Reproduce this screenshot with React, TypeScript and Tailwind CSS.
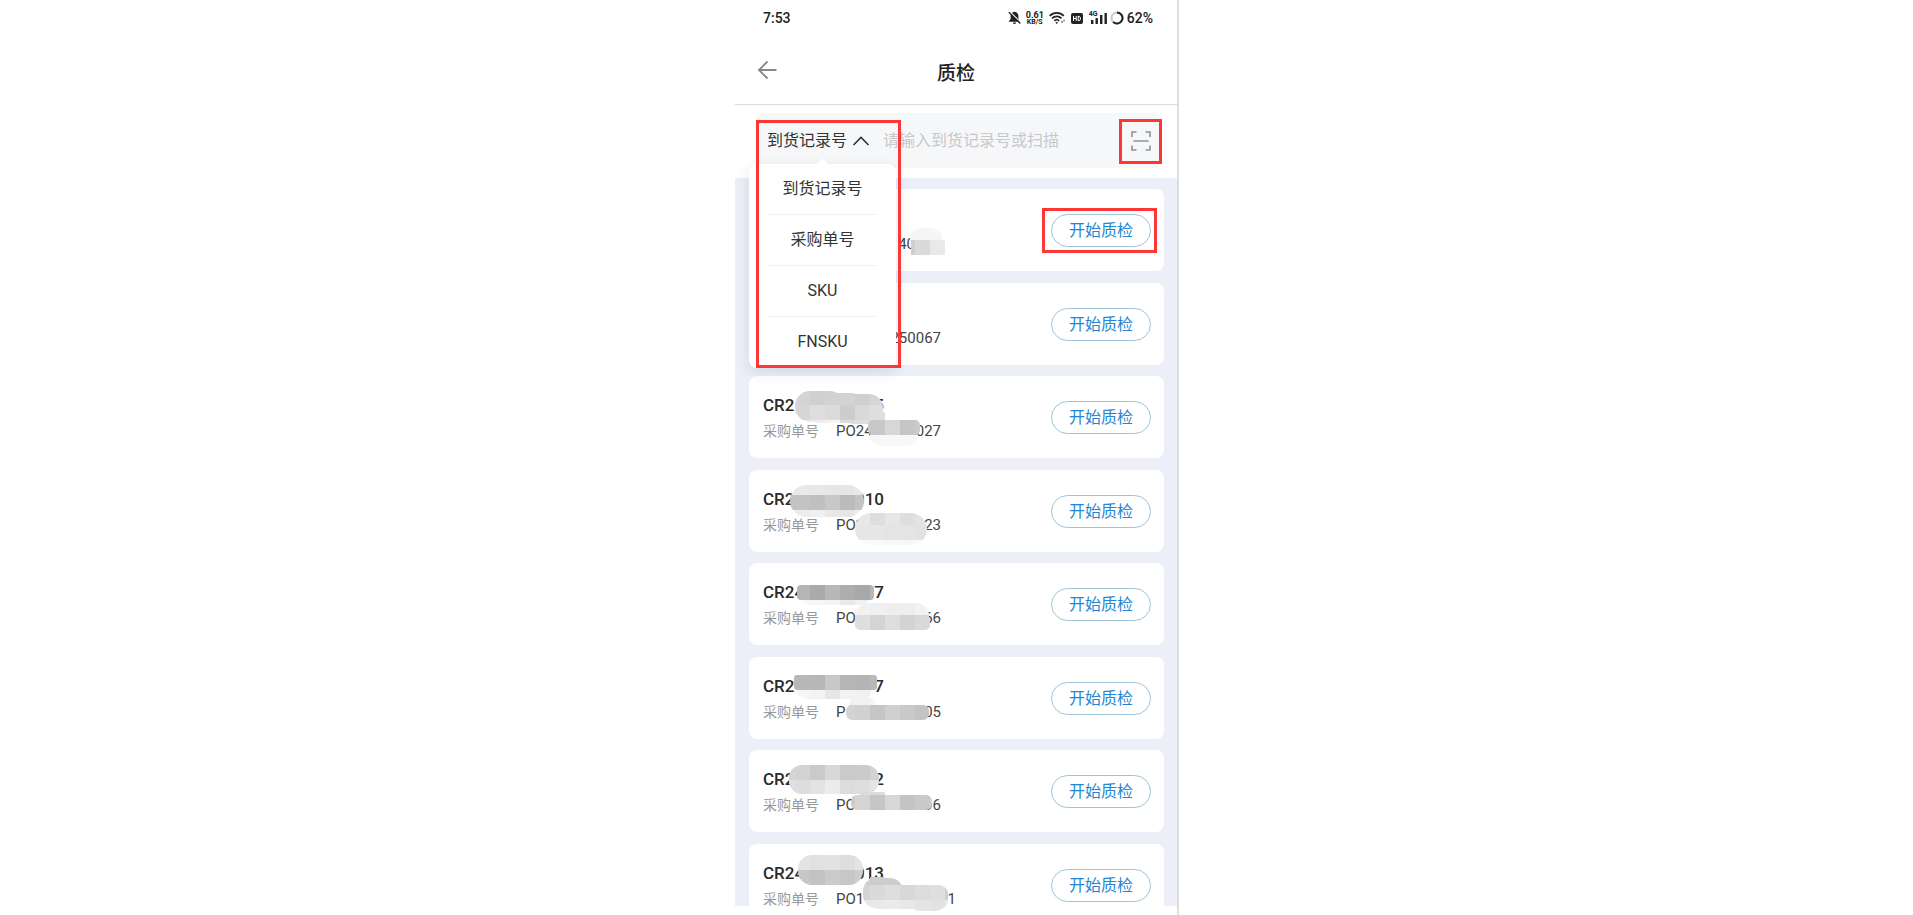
import React from "react";

type Box = [x: number, y: number, w: number, h: number, r: number];
type Mosaic = { shape: Box[]; x: number; y: number; rows: string[] };
type RecordItem = {
  top: number;
  code?: [string, string];
  order: [string, string];
  orderClass?: string;
  mosaics: Mosaic[];
};

const CELL = 15;

// Each row is a space separated list of two digit grey levels, one per cell.
const records: RecordItem[] = [
  {
    top: 189,
    order: ["", "40"],
    orderClass: "w-[79px]",
    mosaics: [
      { shape: [[910, 228, 32, 20, 12], [911, 240, 34, 15, 1]], x: 900, y: 225, rows: ["f5 f5 f6", "cf da e9"] },
    ],
  },
  { top: 283, order: ["", "250067"], mosaics: [] },
  {
    top: 376,
    code: ["CR2", "5"],
    order: ["PO24", "027"],
    mosaics: [
      {
        shape: [[795, 391, 50, 31, 15], [810, 393, 50, 30, 8], [840, 394, 43, 30, 14], [855, 412, 30, 11, 1]],
        x: 795,
        y: 390,
        rows: ["d4 d0 d2 d3 d0 d6", "d6 de db cd d9 df", "ee ec f4 dc de e6"],
      },
      { shape: [[868, 420, 52, 15, 5], [870, 426, 48, 20, 12]], x: 855, y: 420, rows: ["c8 c8 d7 c6 cb", "f7 f7 f8 f8 f9"] },
    ],
  },
  {
    top: 470,
    code: ["CR2", "010"],
    order: ["PO2", "23"],
    mosaics: [
      { shape: [[790, 485, 74, 32, 16]], x: 780, y: 480, rows: ["e9 e9 e8 e6 e6 e9", "c3 c3 c0 c8 bb c4", "f2 ec f0 e8 e6 f0"] },
      { shape: [[855, 513, 72, 32, 16]], x: 855, y: 510, rows: ["e8 de e6 de e4", "e6 e6 e4 e4 e2", "fa f9 f8 f7 f9"] },
    ],
  },
  {
    top: 563,
    code: ["CR24", "17"],
    order: ["PO", "66"],
    mosaics: [
      { shape: [[797, 585, 77, 15, 4], [800, 588, 70, 17, 12]], x: 795, y: 585, rows: ["b5 aa b8 ad a8 b6", "f8 f6 f3 e9 f0 f6"] },
      { shape: [[855, 603, 74, 27, 13], [855, 615, 75, 15, 5]], x: 855, y: 600, rows: ["f2 f0 ee ee f2", "df d4 de d3 d9"] },
    ],
  },
  {
    top: 657,
    code: ["CR2", "7"],
    order: ["P", "05"],
    mosaics: [
      { shape: [[794, 675, 83, 15, 3], [796, 680, 76, 19, 12]], x: 780, y: 675, rows: ["bb b8 b7 c8 b5 b4 b9", "f6 f5 f3 e6 f2 f1 f5"] },
      { shape: [[849, 696, 26, 16, 10], [846, 705, 83, 15, 6]], x: 840, y: 690, rows: ["f2 f2 f6 f8 f8 f8", "d4 d1 c6 d0 c9 c4"] },
    ],
  },
  {
    top: 750,
    code: ["CR2", "2"],
    order: ["PO", "96"],
    mosaics: [
      { shape: [[789, 765, 90, 29, 13]], x: 780, y: 765, rows: ["d5 d3 ca d8 ca cb d3", "df dd e3 ec dc df e5"] },
      { shape: [[851, 795, 81, 15, 6], [860, 792, 25, 8, 1]], x: 840, y: 780, rows: ["dc dc dc dc dc dc dc", "cc d4 c6 d7 c4 c9 d0"] },
    ],
  },
  {
    top: 844,
    code: ["CR24", "013"],
    order: ["PO1", "1"],
    orderClass: "w-[120px]",
    mosaics: [
      { shape: [[798, 855, 65, 30, 14]], x: 795, y: 855, rows: ["e4 e1 e2 de e4", "c7 c2 cb c7 ce"] },
      {
        shape: [[863, 878, 40, 30, 13], [870, 877, 15, 12, 1], [870, 885, 78, 24, 9], [910, 890, 36, 21, 10]],
        x: 855,
        y: 870,
        rows: ["cf cd cd cd cd cd cd", "d4 da de d8 dc df d0", "e8 e9 eb e8 e4 e2 e7"],
      },
    ],
  },
];

const options = ["到货记录号", "采购单号", "SKU", "FNSKU"];

function MosaicLayer({ item }: { item: RecordItem }) {
  return (
    <svg
      className="pointer-events-none absolute top-0 left-0 h-[82px] w-[230px] overflow-visible"
      viewBox={`749 ${item.top} 230 82`}
      aria-hidden="true"
    >
      {item.mosaics.map((m, i) => {
        const id = `mosaic-${item.top}-${i}`;
        return (
          <g key={id}>
            <clipPath id={id}>
              {m.shape.map(([x, y, w, h, r], k) => (
                <rect key={k} x={x} y={y} width={w} height={h} rx={r} />
              ))}
            </clipPath>
            <g clipPath={`url(#${id})`} shapeRendering="crispEdges">
              {m.rows.map((row, ry) =>
                row.split(" ").map((v, cx) => (
                  <rect
                    key={`${ry}-${cx}`}
                    x={m.x + cx * CELL}
                    y={m.y + ry * CELL}
                    width={CELL}
                    height={CELL}
                    fill={`#${v}${v}${v}`}
                  />
                ))
              )}
            </g>
          </g>
        );
      })}
    </svg>
  );
}

function StatusBar() {
  return (
    <div className="flex h-9 items-center justify-between pr-6 pl-7 text-[#222]">
      <span className="text-sm font-medium">7:53</span>
      <div className="flex items-center">
        <svg className="mr-1.5 h-[14px] w-[13px]" viewBox="0 0 13 14" fill="#222" aria-hidden="true">
          <path d="M6.500.8C4 1.200 2.600 3 2.600 5v3L.6 10.800h11.800L10.400 8V5C10.400 3 9 1.200 6.500.8ZM5 11.600h3a1.500 1.500 0 0 1-3 0Z" />
          <path d="M1.500.5 13 11.500" stroke="#fff" strokeWidth="1.200" />
          <path d="M.8 1.200 12.300 12.500" stroke="#222" strokeWidth="1.300" />
        </svg>
        <span className="mr-1.5 flex w-4 flex-col items-center font-bold">
          <span className="text-[9px] leading-[8px]">0.61</span>
          <span className="text-[7px] leading-[6px]">KB/S</span>
        </span>
        <svg className="mr-1.5 h-[14px] w-4" viewBox="0 0 16 14" fill="none" stroke="#222" strokeWidth="1.700" aria-hidden="true">
          <path d="M.7 4.800C4.700.8 10.800.8 14.800 4.800M3 7.400c2.700-2.700 6.800-2.700 9.500 0M5.300 9.800c1.400-1.400 3.500-1.400 4.900 0" />
          <path d="m7.750 13-1.400-1.600c.8-.7 2-.7 2.800 0Z" fill="#222" stroke="none" />
          <path d="M12.500 10.800h1M14.500 9.500h1" />
        </svg>
        <svg className="mr-1.5 h-[11px] w-[12px]" viewBox="0 0 12 11" aria-hidden="true">
          <rect width="12" height="11" rx="2" fill="#222" />
          <path d="M2.500 3v5M5.200 3v5M2.500 5.500h2.700M7.200 3v5M7 3.400h1.200c1.700 0 1.700 4.200 0 4.200H7" fill="none" stroke="#fff" />
        </svg>
        <span className="relative mr-0.5 h-[14px] w-[19px]">
          <span className="absolute top-0 left-0 text-[7px] leading-[6px] font-bold">4G</span>
          <svg className="h-[14px] w-[19px]" viewBox="0 0 19 14" fill="#222" aria-hidden="true">
            <path d="M2 9h2.400v4H2zM6.500 7h2.400v6H6.500zM11 4h2.400v9H11zM15.500 2h2.400v11h-2.400z" />
          </svg>
        </span>
        <svg className="mr-[3px] h-[14px] w-[14px]" viewBox="0 0 14 14" fill="none" strokeWidth="2" aria-hidden="true">
          <circle cx="7" cy="7" r="5.500" stroke="#c9c9c9" />
          <path d="M7 1.500a5.500 5.500 0 1 1-3.800 9.500" stroke="#222" />
        </svg>
        <span className="text-sm font-medium">62%</span>
      </div>
    </div>
  );
}

function SearchBar() {
  return (
    <section className="relative z-10 bg-white pt-2 pr-4 pb-[10px] pl-[21px]">
      <div className="relative flex h-[55px] items-center rounded-lg bg-[#f6f7f9] pl-[11px]">
        <button type="button" aria-expanded="true" className="flex items-center gap-[5px] text-base text-[#333]">
          到货记录号
          <svg className="h-4 w-[18px]" viewBox="0 0 18 16" fill="none" stroke="#333" strokeWidth="1.600" aria-hidden="true">
            <path d="m1.500 12 7.500-7.500 7.500 7.500" />
          </svg>
        </button>
        <input
          type="text"
          aria-label="到货记录号"
          placeholder="请输入到货记录号或扫描"
          className="ml-[13px] min-w-0 flex-1 bg-transparent text-base outline-none placeholder:text-[#c6c8ca]"
        />
        <button type="button" aria-label="扫描" className="relative mr-[10px] flex h-8 w-[21px] items-center justify-center">
          <svg className="h-5 w-5" viewBox="0 0 20 20" fill="none" stroke="#8f9296" strokeWidth="1.600" aria-hidden="true">
            <path d="M1 6V1h4.500M14.500 1H19v5M19 14.500V19h-4.500M5.500 19H1v-4.500M2.500 10h15" />
          </svg>
          <span className="absolute -inset-x-[11px] -top-1.5 -bottom-[7px] border-3 border-[#fd3735]" />
        </button>

        <ul className="absolute top-[51px] -left-[7px] w-[147px] rounded-lg bg-white px-[19px] text-center text-base text-[#333] shadow-[0_4px_14px_rgba(60,70,90,0.14)]">
          <li aria-hidden="true" className="absolute -top-1 left-[69px] h-[9px] w-[9px] rotate-45 bg-white" />
          {options.map((o) => (
            <li key={o} className="border-b border-[#f2f2f2] last:border-transparent">
              <button type="button" className="h-[50px] w-full">
                {o}
              </button>
            </li>
          ))}
        </ul>
        <span className="pointer-events-none absolute top-[7px] left-0 h-[248px] w-[145px] border-3 border-[#fd3735]" />
      </div>
    </section>
  );
}

function RecordCard({ item, first, last }: { item: RecordItem; first: boolean; last: boolean }) {
  return (
    <li
      className={
        "relative flex items-start justify-between bg-white pr-[13px] pl-[14px] odd:mb-3 even:mb-[11px] last:mb-0 " +
        (last ? "h-[62px] rounded-t-lg" : "h-[82px] rounded-lg")
      }
    >
      <div className="pt-[17px]">
        <div className="flex h-6 w-[121px] justify-between text-[17px] leading-6 font-medium text-[#2b2b2b]">
          {item.code && (
            <>
              <span>{item.code[0]}</span>
              <span>{item.code[1]}</span>
            </>
          )}
        </div>
        <div className="mt-1.5 flex text-sm leading-4">
          <span className="w-[73px] text-[#999]">{item.code ? "采购单号" : ""}</span>
          <span className={"flex justify-between text-[15px] leading-4 text-[#444] " + (item.orderClass ?? "w-[105px]")}>
            <span>{item.order[0]}</span>
            <span>{item.order[1]}</span>
          </span>
        </div>
      </div>
      <MosaicLayer item={item} />
      <div className="relative mt-[25px]">
        <button
          type="button"
          className="h-[33px] w-[100px] rounded-full border border-[#9fc3d6] bg-white text-base leading-none text-[#2585d3]"
        >
          开始质检
        </button>
        {first && (
          <span className="pointer-events-none absolute -top-1.5 -right-1.5 -bottom-1.5 -left-[9px] border-3 border-[#fd3735]" />
        )}
      </div>
    </li>
  );
}

export default function App() {
  return (
    <div className="min-h-screen bg-white font-[Roboto,'Noto_Sans_CJK_SC',sans-serif]">
      <div className="mx-auto min-h-screen w-full max-w-[445px] border-r-2 border-l border-r-[#dedde2] border-l-white">
        <StatusBar />
        <header className="grid h-[69px] grid-cols-[48px_1fr_48px] items-center border-b border-[#dcdcdc]">
          <button type="button" aria-label="返回" className="pl-[22px]">
            <svg className="h-5 w-5" viewBox="0 0 20 20" fill="none" stroke="#888" strokeWidth="1.900" aria-hidden="true">
              <path d="M19.500 10H2M10.500 1.500 2 10l8.500 8.500" />
            </svg>
          </button>
          <h1 className="pt-2 text-center text-[19px] font-medium text-[#222]">质检</h1>
        </header>
        <SearchBar />
        <ul className="bg-[#eceff8] pt-[11px] pr-[13px] pl-[14px]">
          {records.map((item, i) => (
            <RecordCard key={item.top} item={item} first={i === 0} last={i === records.length - 1} />
          ))}
        </ul>
      </div>
    </div>
  );
}
